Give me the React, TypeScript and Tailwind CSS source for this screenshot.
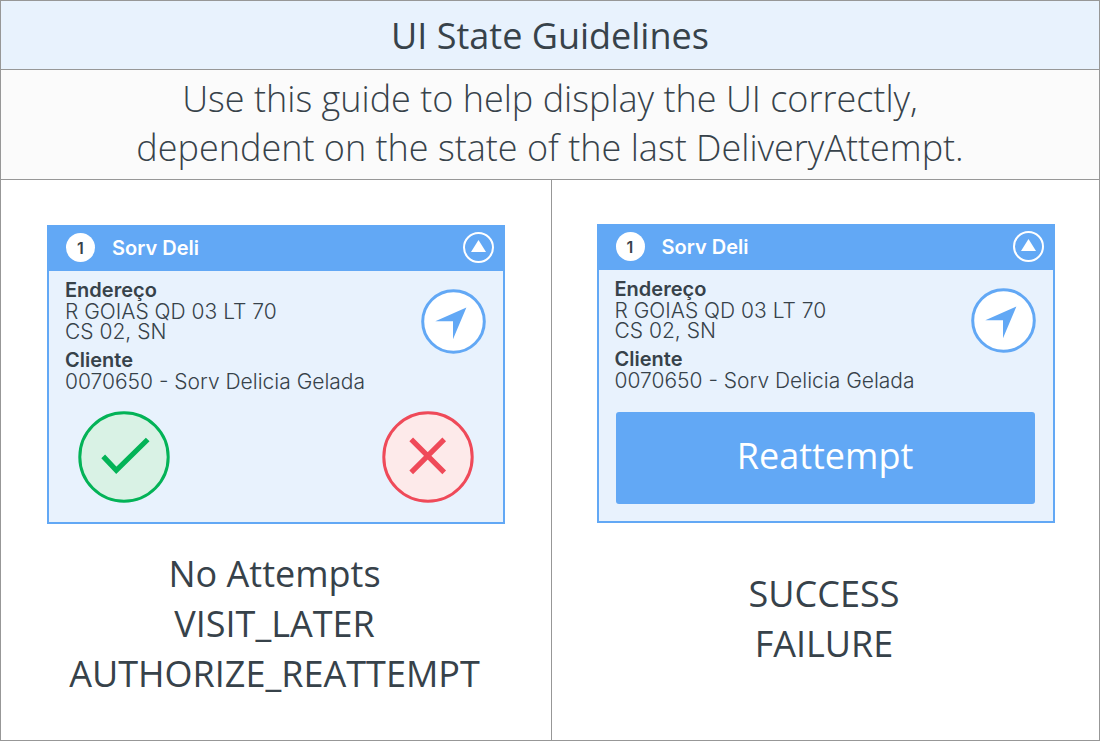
import type { ReactNode } from "react";

function CollapseIcon() {
  return (
    <svg viewBox="0 0 31 31" className="size-[31px]" aria-hidden="true">
      <circle cx="15.5" cy="15.5" r="14.5" fill="none" stroke="#fff" strokeWidth="2" />
      <path d="M15.5 8 L23 20 H8 Z" fill="#fff" />
    </svg>
  );
}

function NavigateIcon() {
  return (
    <svg viewBox="0 0 65 65" className="size-[65px]" aria-hidden="true">
      <circle cx="32.5" cy="32.5" r="30.8" fill="#fff" stroke="#62a8f5" strokeWidth="3" />
      <path d="M45.4 18.6 L14.3 32.2 H32 V50.2 Z" fill="#62a8f5" />
    </svg>
  );
}

function CheckIcon() {
  return (
    <svg viewBox="0 0 92 92" className="size-[92px]" aria-hidden="true">
      <circle cx="46" cy="46" r="44.2" fill="#d9f2e5" stroke="#03b357" strokeWidth="3" />
      <path d="M25.2 45.4 L38.3 59.3 L69.7 28.5" fill="none" stroke="#03b357" strokeWidth="5.2" />
    </svg>
  );
}

function CrossIcon() {
  return (
    <svg viewBox="0 0 92 92" className="size-[92px]" aria-hidden="true">
      <circle cx="46" cy="46" r="44.2" fill="#fdeaea" stroke="#ef4a59" strokeWidth="3" />
      <path d="M29.2 28.3 L62.2 61.3 M62.2 28.3 L29.2 61.3" fill="none" stroke="#ef4a59" strokeWidth="5.2" />
    </svg>
  );
}

function DeliveryCard({ children }: { children: ReactNode }) {
  return (
    <article className="w-full max-w-[458px] border-2 border-[#62a8f5] bg-[#e8f2fd] font-['Inter',sans-serif]">
      <header className="flex h-11 items-center bg-[#62a8f5] pr-[9px] pb-[3px] pl-[17px]">
        <span className="flex size-[29px] items-center justify-center rounded-full bg-white text-base font-semibold">
          1
        </span>
        <h2 className="ml-[17px] grow text-[20px] leading-5 font-semibold text-white">Sorv Deli</h2>
        <button type="button" aria-label="Collapse">
          <CollapseIcon />
        </button>
      </header>
      <div className="flex items-start justify-between pr-[17px] pl-4">
        <dl className="pt-[9px] text-[21px] leading-5">
          <dt className="pb-[2px] text-[20px] leading-5 font-semibold">Endereço</dt>
          <dd className="font-light">
            R GOIAS QD 03 LT 70
            <br />
            CS 02, SN
          </dd>
          <dt className="pt-2 pb-[2px] text-[20px] leading-5 font-semibold">Cliente</dt>
          <dd className="font-light">0070650 - Sorv Delicia Gelada</dd>
        </dl>
        <button type="button" aria-label="Navigate" className="mt-[18px] shrink-0">
          <NavigateIcon />
        </button>
      </div>
      {children}
    </article>
  );
}

function StateList({ states, className }: { states: string[]; className: string }) {
  return (
    <ul className={`pr-[3px] text-center text-[36px] leading-[50px] ${className}`}>
      {states.map((state) => (
        <li key={state}>{state}</li>
      ))}
    </ul>
  );
}

export default function App() {
  return (
    <main className="flex min-h-screen flex-col border border-[#979797] bg-white font-['Open_Sans',sans-serif] text-[#37424a]">
      <h1 className="border-b border-[#979797] bg-[#e8f2fd] pt-[10px] pb-2 text-center text-[36px] leading-[50px]">
        UI State Guidelines
      </h1>
      <p className="border-b border-[#979797] bg-[#fbfbfb] pt-1 pb-[7px] text-center text-[36px] leading-[49px] font-light">
        Use this guide to help display the UI correctly,
        <br />
        dependent on the state of the last DeliveryAttempt.
      </p>
      <div className="grid grow grid-cols-[551fr_547fr]">
        <section className="flex flex-col items-center border-r border-[#979797] pt-[45px] pb-10">
          <DeliveryCard>
            <div className="flex justify-between px-[29px] pt-[19px] pb-[19px]">
              <button type="button" aria-label="Delivered">
                <CheckIcon />
              </button>
              <button type="button" aria-label="Not delivered">
                <CrossIcon />
              </button>
            </div>
          </DeliveryCard>
          <StateList className="mt-[25px]" states={["No Attempts", "VISIT_LATER", "AUTHORIZE_REATTEMPT"]} />
        </section>
        <section className="flex flex-col items-center pt-11 pb-10">
          <DeliveryCard>
            <div className="pt-[21px] pr-[18px] pb-[17px] pl-[17px]">
              <button
                type="button"
                className="h-[92px] w-full rounded-[3px] bg-[#62a8f5] pb-[5px] font-['Open_Sans',sans-serif] text-[36px] text-white"
              >
                Reattempt
              </button>
            </div>
          </DeliveryCard>
          <StateList className="mt-[46px]" states={["SUCCESS", "FAILURE"]} />
        </section>
      </div>
    </main>
  );
}
